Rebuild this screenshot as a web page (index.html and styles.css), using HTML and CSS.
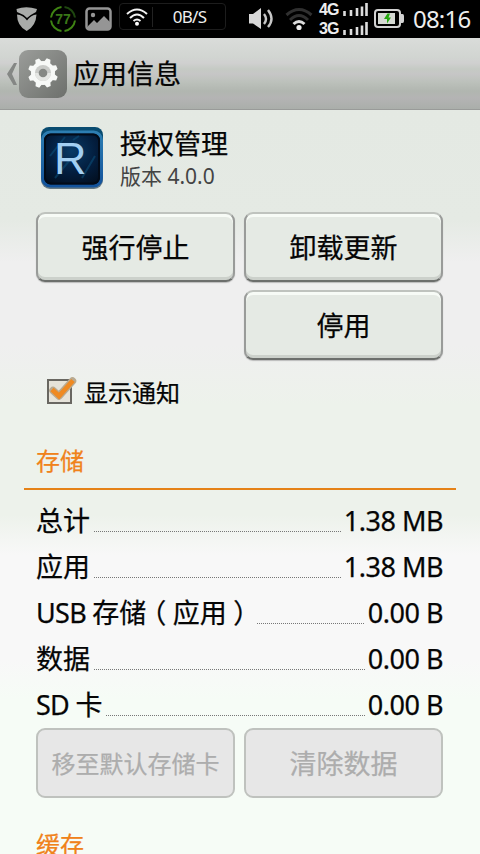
FILE: index.html
```html
<!DOCTYPE html>
<html lang="zh-CN">
<head>
<meta charset="utf-8">
<title>应用信息</title>
<link rel="stylesheet" href="styles.css">
</head>
<body>
<div class="status">
  <svg class="shield" width="22" height="26" viewBox="0 0 22 26"><path d="M0.500 3Q10-0.500 21 3L20 6Q14 9 11 12Q7 8 1 6Z" fill="#a9aba9"/><path d="M1 8.500Q7 9 11 14.500Q15 9 20.500 8.500Q20 20 10.700 25Q1 20 1 8.500Z" fill="#a9aba9"/></svg>
  <svg class="ring" width="28" height="28" viewBox="0 0 28 28"><g fill="none" stroke="#3f8413" stroke-width="2"><path d="M12.500 2A12 12 0 0 0 2 12.500M2 15.500A12 12 0 0 0 12.500 26M15.500 26A12 12 0 0 0 26 15.500"/><path d="M15.500 2A12 12 0 0 1 26 12.500" stroke="#1f4710"/></g><text x="14" y="19" text-anchor="middle" class="ring-text">77</text></svg>
  <svg class="photo" width="27" height="24" viewBox="0 0 27 24"><rect x="1.500" y="1.500" width="24" height="21" rx="3" fill="#000" stroke="#959595" stroke-width="2.500"/><circle cx="8" cy="8" r="2.200" fill="#959595"/><path d="M3 21V19L9 13L12 16L19 9L25 15V22H3Z" fill="#959595"/></svg>
  <div class="speed">
    <svg width="22" height="18" viewBox="0 0 22 18"><g fill="none" stroke="#f2f2f2" stroke-width="2"><path d="M1 6Q11-3 21 6M4 10Q11 3 18 10M7.500 13Q11 10 14.500 13"/></g><circle cx="11" cy="15.800" r="2" fill="#fff"/></svg>
    <span class="rate">0B/S</span>
  </div>
  <svg class="sound" width="24" height="22" viewBox="0 0 24 22"><path d="M0 6H4L12 0V21L4 15.500H0Z" fill="#d8d8d8"/><g fill="none" stroke="#c8c8c8" stroke-width="2.400"><path d="M15 6Q19 11 15 16M19 2Q26 11 19 19"/></g></svg>
  <svg class="wifi" width="28" height="24" viewBox="0 0 28 24"><g fill="none" stroke-width="3"><path d="M1.500 8Q14-3 26.500 8" stroke="#303030"/><path d="M5 13Q14 4 23 13" stroke="#303030"/><path d="M8.500 17Q14 12 19.500 17" stroke="#ddd"/></g><circle cx="14" cy="20.500" r="2.600" fill="#eee"/></svg>
  <div class="signals">
    <div class="signal"><span>4G</span><svg width="25" height="15" viewBox="0 0 25 15"><path d="M1.500 8V13M8 7V13M14 5V13M19 3.500V13M23.500 0V13" stroke="#ddd" stroke-width="2.600"/></svg></div>
    <div class="signal"><span>3G</span><svg width="25" height="15" viewBox="0 0 25 15"><path d="M1.500 8V13M8 7V13M14 5V13M19 3.500V13M23.500 0V13" stroke="#ddd" stroke-width="2.600"/></svg></div>
  </div>
  <svg class="battery" width="30" height="20" viewBox="0 0 30 20"><rect x="1" y="1" width="25" height="17" rx="3" fill="#000" stroke="#d2d2d2" stroke-width="2"/><path d="M27 5H28.500Q30 5 30 7V12Q30 14 28.500 14H27Z" fill="#d2d2d2"/><rect x="4" y="4" width="17" height="11" fill="#d5d9d3"/><path d="M13.500 4.500L10 10H13V14.500L17 8.500H14.500L16 4.500Z" fill="#24a80e"/></svg>
  <span class="clock">08:16</span>
</div>
<header class="bar">
  <svg class="back" width="10" height="22" viewBox="0 0 10 22"><path d="M7 0H10L5 11L10 22H6.500L0 11Z" fill="#858785"/></svg>
  <svg class="gear" width="48" height="48" viewBox="0 0 48 48">
    <defs><linearGradient id="g" x1="0" y1="0" x2="1" y2="1"><stop offset="0" stop-color="#9b9d9a"/><stop offset="1" stop-color="#6d706c"/></linearGradient></defs>
    <rect width="48" height="48" rx="9" fill="url(#g)"/>
    <g transform="translate(24 23)" fill="#f7f9f7"><circle r="12"/>
      <g><path d="M-3.600-10L-2-15H2L3.600-10ZM-3.600 10L-2 15H2L3.600 10ZM-10-3.600L-15-2V2L-10 3.600ZM10-3.600L15-2V2L10 3.600Z" transform="rotate(22)"/><path d="M-3.600-10L-2-15H2L3.600-10ZM-3.600 10L-2 15H2L3.600 10ZM-10-3.600L-15-2V2L-10 3.600ZM10-3.600L15-2V2L10 3.600Z" transform="rotate(67)"/></g>
      <circle r="8" fill="#c9cbc8"/><path d="M-8 0A8 8 0 0 0 8 0Z" fill="#e4e6e3"/><circle r="4.300" fill="#858884"/></g>
  </svg>
  <h1>应用信息</h1>
</header>
<main>
  <section class="app">
    <svg width="62" height="63" viewBox="0 0 62 63">
      <defs><radialGradient id="r" cx=".5" cy=".35" r=".75"><stop offset="0" stop-color="#073a66"/><stop offset=".55" stop-color="#031d3d"/><stop offset="1" stop-color="#020d1c"/></radialGradient><linearGradient id="e" x2="0" y2="1"><stop offset="0" stop-color="#2d7eb2"/><stop offset="1" stop-color="#13539c"/></linearGradient></defs>
      <rect y="2" width="62" height="60" rx="9" fill="#667983"/>
      <rect width="62" height="30" rx="8" fill="#084b70"/>
      <rect x="1.500" y="5" width="59" height="54" rx="8" fill="url(#r)" stroke="url(#e)" stroke-width="3"/>
      <rect x="4" y="7.500" width="54" height="49" rx="6" fill="none" stroke="#020b18" stroke-width="2"/>
      <path d="M9 29L24 10M14 51L28 34M41 51L54 29M32 13L38 9" stroke="#0c5580" stroke-width="2" opacity=".5"/>
      <text x="13" y="46.500" class="logo">R</text>
    </svg>
    <div class="names"><h2>授权管理</h2><p>版本 4.0.0</p></div>
  </section>
  <div class="buttons">
    <button>强行停止</button><button>卸载更新</button><button class="second">停用</button>
  </div>
  <label class="check">
    <svg width="32" height="30" viewBox="0 0 32 30"><rect x="2" y="5" width="23" height="23" fill="#e6e3d9" stroke="#696761" stroke-width="2"/><path d="M7 15.500L13 21L26.500 6" fill="none" stroke="#b9aa91" stroke-width="7.500" stroke-linejoin="round" stroke-linecap="round"/><path d="M6 14.500L13 21L27 5.500" fill="none" stroke="#ef8a22" stroke-width="4.800"/></svg>
    <span>显示通知</span>
  </label>
  <h3>存储</h3>
  <hr>
  <dl>
    <div class="row"><dt>总计</dt><i></i><dd>1.38 MB</dd></div>
    <div class="row"><dt>应用</dt><i></i><dd>1.38 MB</dd></div>
    <div class="row"><dt><span class="latin">USB </span>存储<span class="paren">（</span>应用<span class="paren">）</span></dt><i></i><dd>0.00 B</dd></div>
    <div class="row"><dt>数据</dt><i></i><dd>0.00 B</dd></div>
    <div class="row"><dt><span class="latin">SD </span>卡</dt><i></i><dd>0.00 B</dd></div>
  </dl>
  <div class="buttons off">
    <button class="small" disabled>移至默认存储卡</button><button disabled>清除数据</button>
  </div>
  <h3 class="cache">缓存</h3>
</main>
</body>
</html>
```
FILE: styles.css
```css
* { box-sizing: border-box; margin: 0; padding: 0; }
body {
  width: 480px;
  height: 854px;
  overflow: hidden;
  display: flex;
  flex-direction: column;
  font-family: "Noto Sans", "Noto Sans CJK SC", sans-serif;
  color: #050505;
  -webkit-text-stroke: .25px currentColor;
}
svg { display: block; flex: none; }
svg text { -webkit-text-stroke: 0; }
h1, h2, h3 { font-weight: 400; }
.status { height: 38px; flex: none; display: flex; align-items: flex-start; background: #000; color: #eee; -webkit-text-stroke: 0; }
.shield { margin: 6px 0 0 16px; }
.ring { margin: 5px 0 0 11px; }
.ring-text { font: 700 14px "Liberation Sans", sans-serif; fill: #397617; }
.photo { margin: 7px 0 0 8px; }
.speed { width: 107px; height: 27px; margin: 3px 0 0 7px; padding-left: 6px; display: flex; align-items: center; border: 1px solid #1d1d1d; border-radius: 4px; }
.rate { flex: 1; height: 20px; margin-left: 4px; padding-left: 1px; border-left: 1px solid #222; text-align: center; font-size: 17px; line-height: 19px; letter-spacing: -.7px; }
.sound { margin: 8px 0 0 23px; }
.wifi { margin: 7px 0 0 12px; }
.signals { margin: 3px 0 0 6px; }
.signal { height: 19px; display: flex; gap: 4px; }
.signal span { width: 20px; font: 700 16px/14px "Liberation Sans", sans-serif; letter-spacing: -1px; }
.battery { margin: 9px 0 0 6px; }
.clock { margin-left: 9px; font-size: 24px; line-height: 38px; letter-spacing: -.8px; white-space: nowrap; }
.bar {
  height: 72px;
  flex: none;
  display: flex;
  align-items: center;
  padding-left: 7px;
  border-bottom: 1px solid #999b99;
  background: linear-gradient(#dadcda 0, #d1d5d1 19px, #d0d0d0 25px, #c5cac4 31px, #c6c6c6 36px, #bcc1bb 44px, #b1b6b0 53px, #b4b4b4 60px, #aaaeaa 71px);
}
.gear { margin-left: 2px; margin-top: 1px; }
.bar h1 { margin-left: 6px; font-size: 27px; line-height: 40px; }
main {
  flex: 1;
  min-height: 0;
  padding: 17px 37px 0 36px;
  background: linear-gradient(#e4e9e3 0, #e5eae4 110px, #efefef 152px, #efefef 235px, #edf2eb 295px, #edf2eb 405px, #f8f8f8 445px, #f8f8f8 550px, #f6fcf6 590px);
}
.app { display: flex; height: 85px; padding-left: 5px; }
svg .logo { font: 400 45px "Liberation Sans", sans-serif; fill: #a2cff2; -webkit-text-stroke: 2px #a2cff2; }
.names { margin-left: 17px; }
.names h2 { font-size: 27px; line-height: 34px; }
.names p { font-size: 21px; line-height: 31px; color: #444; -webkit-text-stroke: 0; }
.buttons { display: grid; grid-template-columns: 199px 199px; gap: 8px 9px; }
button {
  height: 70px;
  padding-bottom: 1px;
  border: 2px solid #999b99;
  border-top-color: #bfc3be;
  border-bottom-color: #6c6f6c;
  border-radius: 9px;
  background: #e5eae4;
  box-shadow: inset 0 3px 0 #f7fbf6, inset 0 -3px 0 #ccd1cb, 0 1px 1px #bbb;
  font: inherit;
  font-size: 27px;
  color: #050505;
}
.second { grid-column: 2; }
.off button { border-color: #bfc2be; background: #e7e7e7; box-shadow: none; color: #adadad; }
.off .small { font-size: 24px; }
.check { display: flex; margin: 15px 0 0 10px; height: 34px; }
.check span { margin-left: 6px; font-size: 24px; line-height: 35px; }
h3 { margin-top: 34px; height: 45px; font-size: 24px; line-height: 35px; color: #f0821a; }
hr { height: 2px; margin: 0 -13px 0 -12px; border: 0; background: #e58217; }
dl { padding-top: 8px; }
.row { display: flex; height: 46px; font-size: 27px; line-height: 45px; white-space: nowrap; }
.row i { flex: 1; height: 1px; margin: 33px 3px 0 4px; background: repeating-linear-gradient(90deg, #777 0 1px, transparent 1px 2px); }
dd { letter-spacing: -.5px; }
.latin { letter-spacing: -.7px; }
.paren { padding: 0 6.5px; font-feature-settings: "halt"; }
h3.cache { margin-top: 29px; }
```
